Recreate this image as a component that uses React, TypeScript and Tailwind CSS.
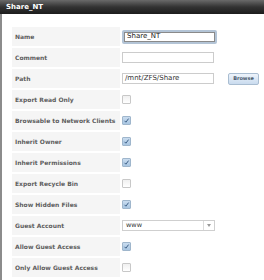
const rows: { label: string; kind: 'text' | 'check' | 'path' | 'select'; value?: string; checked?: boolean; focus?: boolean }[] = [
    { label: 'Name', kind: 'text', value: 'Share_NT', focus: true },
    { label: 'Comment', kind: 'text', value: '' },
    { label: 'Path', kind: 'path', value: '/mnt/ZFS/Share' },
    { label: 'Export Read Only', kind: 'check', checked: false },
    { label: 'Browsable to Network Clients', kind: 'check', checked: true },
    { label: 'Inherit Owner', kind: 'check', checked: true },
    { label: 'Inherit Permissions', kind: 'check', checked: true },
    { label: 'Export Recycle Bin', kind: 'check', checked: false },
    { label: 'Show Hidden Files', kind: 'check', checked: true },
    { label: 'Guest Account', kind: 'select', value: 'www' },
    { label: 'Allow Guest Access', kind: 'check', checked: true },
    { label: 'Only Allow Guest Access', kind: 'check', checked: false },
];

function Check({ checked }: { checked?: boolean }) {
    if (!checked) {
        return <div className="w-[9px] h-[9px] border border-[#c8c8c8] bg-gradient-to-b from-[#f0f0f0] to-white rounded-[1px]" />;
    }
    return (
        <div className="w-[9px] h-[9px] border border-[#9fb6cc] bg-gradient-to-b from-[#c9dcef] to-[#a9c6e2] rounded-[1px] flex items-center justify-center">
            <svg width="7" height="7" viewBox="0 0 7 7">
                <path d="M1.5 3.8 L2.9 5.2 L5.6 1.6" fill="none" stroke="#3d5f86" strokeWidth="1" />
            </svg>
        </div>
    );
}

function Field({ row }: { row: (typeof rows)[number] }) {
    if (row.kind === 'check') return <Check checked={row.checked} />;
    if (row.kind === 'select') {
        return (
            <div className="w-[93px] h-[11px] border border-[#cfcfcf] bg-white flex items-center">
                <span className="flex-1 pl-[3px] text-[6.5px] text-[#333]">{row.value}</span>
                <span className="w-[11px] h-full border-l border-[#dcdcdc] flex items-center justify-center">
                    <svg width="4" height="3" viewBox="0 0 4 3"><path d="M0 0 H4 L2 3 Z" fill="#999" /></svg>
                </span>
            </div>
        );
    }
    const input = row.focus ? (
        <div className="w-[95px] h-[14px] border-2 border-[#b3c4d6] rounded-[2px] bg-white flex items-center">
            <div className="w-full h-full border border-[#8a8a8a] flex items-center pl-[2px] text-[7px] text-[#222]">{row.value}</div>
        </div>
    ) : (
        <div className="w-[92px] h-[11px] border border-[#cccccc] bg-white flex items-center pl-[2px] text-[7px] text-[#333]">{row.value}</div>
    );
    if (row.kind === 'path') {
        return (
            <div className="flex items-center">
                {input}
                <div className="ml-[14px] w-[31px] h-[12px] border border-[#a9bdd1] rounded-[2px] bg-gradient-to-b from-[#eef4fb] to-[#c9dbee] flex items-center justify-center text-[5px] font-bold text-[#4a5b6e]">
                    Browse
                </div>
            </div>
        );
    }
    return input;
}

export default function App() {
    return (
        <div className="w-[264px] h-[280px] bg-white overflow-hidden font-['DejaVu_Sans',sans-serif]">
            {/* Title bar */}
            <div className="h-[14px] bg-gradient-to-b from-[#6a6a6a] via-[#333333] to-[#1c1c1c] flex items-center pl-[6px]">
                <span className="text-white text-[7px] font-bold">Share_NT</span>
            </div>
            <div className="flex h-[266px]">
                <div className="w-[2px] bg-[#8c8c8c]" />
                <div className="flex-1 pt-[13px] pl-[10px] flex flex-col gap-[2px]">
                    {rows.map((row) => (
                        <div key={row.label} className="flex h-[19px] gap-[2px]">
                            <div className="w-[108px] bg-[#f5f5f5] flex items-center pl-[3px] text-[6px] font-bold text-[#5e5e5e]">
                                {row.label}
                            </div>
                            <div className="flex-1 flex items-center">
                                <Field row={row} />
                            </div>
                        </div>
                    ))}
                </div>
            </div>
        </div>
    );
}
